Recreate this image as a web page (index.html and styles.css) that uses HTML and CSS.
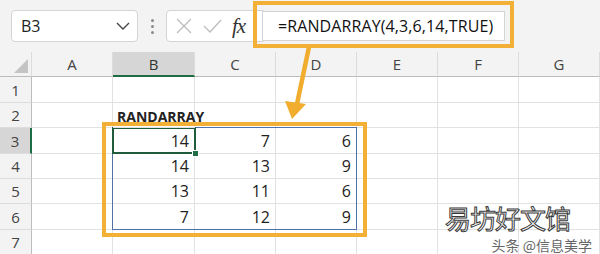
FILE: index.html
```html
<!DOCTYPE html>
<html lang="zh">
<head>
  <meta charset="UTF-8" />
  <title>RANDARRAY</title>
  <link rel="stylesheet" href="styles.css">
</head>
<body>
  <div class="page">
    <!-- Formula bar -->
    <header class="toolbar">
      <div class="name-box">
        <span>B3</span>
        <svg class="chevron" width="14" height="8" viewBox="0 0 14 8"><path d="M1 1 L7 7 L13 1" fill="none" stroke="#444" stroke-width="1.4"/></svg>
      </div>
      <div class="dots"><i></i><i></i><i></i></div>
      <div class="fx-box">
        <svg width="18" height="18" viewBox="0 0 18 18"><path d="M2 2 L16 16 M16 2 L2 16" stroke="#bdbdbd" stroke-width="1.3"/></svg>
        <svg width="20" height="18" viewBox="0 0 20 18"><path d="M2 9 L8 15 L19 3" fill="none" stroke="#bdbdbd" stroke-width="1.3"/></svg>
        <span class="fx">fx</span>
      </div>
      <div class="formula">=RANDARRAY(4,3,6,14,TRUE)</div>
    </header>

    <!-- Sheet -->
    <div class="sheet">
      <div class="corner"><svg width="14" height="14" viewBox="0 0 14 14"><path d="M14 0 L14 14 L0 14 Z" fill="#c4c4c4"/></svg></div>
      <div class="col-head">A</div>
      <div class="col-head active">B</div>
      <div class="col-head">C</div>
      <div class="col-head">D</div>
      <div class="col-head">E</div>
      <div class="col-head">F</div>
      <div class="col-head">G</div>

      <div class="row-head">1</div>
      <div class="cell"></div><div class="cell"></div><div class="cell"></div><div class="cell"></div><div class="cell"></div><div class="cell"></div><div class="cell"></div>

      <div class="row-head">2</div>
      <div class="cell"></div><div class="cell title">RANDARRAY</div><div class="cell"></div><div class="cell"></div><div class="cell"></div><div class="cell"></div><div class="cell"></div>

      <div class="row-head active">3</div>
      <div class="cell"></div><div class="cell num">14</div><div class="cell num">7</div><div class="cell num">6</div><div class="cell"></div><div class="cell"></div><div class="cell"></div>

      <div class="row-head">4</div>
      <div class="cell"></div><div class="cell num">14</div><div class="cell num">13</div><div class="cell num">9</div><div class="cell"></div><div class="cell"></div><div class="cell"></div>

      <div class="row-head">5</div>
      <div class="cell"></div><div class="cell num">13</div><div class="cell num">11</div><div class="cell num">6</div><div class="cell"></div><div class="cell"></div><div class="cell"></div>

      <div class="row-head">6</div>
      <div class="cell"></div><div class="cell num">7</div><div class="cell num">12</div><div class="cell num">9</div><div class="cell"></div><div class="cell"></div><div class="cell"></div>

      <div class="row-head">7</div>
      <div class="cell"></div><div class="cell"></div><div class="cell"></div><div class="cell"></div><div class="cell"></div><div class="cell"></div><div class="cell"></div>
    </div>

    <!-- Overlays -->
    <div class="selection"></div>
    <div class="active-cell"><span class="handle"></span></div>
    <div class="hl hl-formula"></div>
    <div class="hl hl-range"></div>
    <svg class="arrow" width="600" height="254" viewBox="0 0 600 254">
      <line x1="309" y1="47" x2="297" y2="104" stroke="#f0ad2e" stroke-width="4.5"/>
      <polygon points="285,101 306,104 292,119" fill="#f0ad2e"/>
    </svg>

    <div class="watermark">
      <div class="wm-big">易坊好文馆</div>
      <div class="wm-small">头条 @信息美学</div>
    </div>
  </div>
</body>
</html>
```

FILE: styles.css
```css
* {
  margin: 0;
  padding: 0;
  box-sizing: border-box;
}

body {
  font-family: "Open Sans", "Noto Sans", sans-serif;
  color: #222;
  background: #fff;
  width: 600px;
  height: 254px;
  overflow: hidden;
}

.page {
  position: relative;
  width: 600px;
  height: 254px;
  overflow: hidden;
}

/* toolbar */
.toolbar {
  height: 52px;
  background: #f3f3f3;
  display: flex;
  align-items: center;
  padding: 0 0 0 11px;
}

.name-box {
  width: 127px;
  height: 32px;
  background: #fff;
  border: 1px solid #d4d4d4;
  border-radius: 4px;
  display: flex;
  align-items: center;
  justify-content: space-between;
  padding: 0 7px 0 9px;
  font-size: 16px;
  color: #222;
}

.dots {
  width: 28px;
  display: flex;
  flex-direction: column;
  align-items: center;
  gap: 3px;
}

.dots i {
  width: 3px;
  height: 3px;
  border-radius: 50%;
  background: #8a8a8a;
}

.fx-box {
  width: 100px;
  height: 32px;
  background: #fff;
  border: 1px solid #d4d4d4;
  border-radius: 4px;
  display: flex;
  align-items: center;
  gap: 9px;
  padding-left: 8px;
}

.fx {
  font-family: "Liberation Serif", "DejaVu Serif", serif;
  font-style: italic;
  font-size: 21px;
  color: #333;
  margin-left: 1px;
  letter-spacing: -1px;
}

.formula {
  position: relative;
  margin-left: -4px;
  width: 243px;
  height: 30px;
  background: #fff;
  border: 1px solid #d4d4d4;
  font-size: 16px;
  line-height: 28px;
  padding-left: 15px;
  color: #111;
  letter-spacing: 0.1px;
}

/* sheet */
.sheet {
  display: grid;
  grid-template-columns: 32px 81px 82px 81px 81px 81px 81px 81px;
  grid-template-rows: 25px 26px 25px 26px 25px 25px 26px 25px;
}

.corner,
.col-head {
  background: #f3f3f3;
  border-right: 1px solid #dcdcdc;
  border-bottom: 1px solid #bcbcbc;
}

.corner {
  display: flex;
  align-items: flex-end;
  justify-content: flex-end;
  padding: 0 3px 3px 0;
}

.col-head {
  font-size: 15px;
  color: #444;
  text-align: center;
  line-height: 24px;
}

.col-head.active {
  background: #d6d6d6;
  border-bottom: 2px solid #1e6c44;
  color: #333;
}

.row-head {
  background: #f3f3f3;
  border-right: 1px solid #bcbcbc;
  border-bottom: 1px solid #dcdcdc;
  font-size: 15px;
  color: #444;
  display: flex;
  align-items: center;
  justify-content: center;
}

.row-head.active {
  background: #d6d6d6;
  border-right: 2px solid #1e6c44;
}

.cell {
  border-right: 1px solid #e2e2e2;
  border-bottom: 1px solid #e2e2e2;
  font-size: 16px;
}

.num {
  display: flex;
  align-items: center;
  justify-content: flex-end;
  padding-right: 5px;
}

.title {
  font-weight: bold;
  font-size: 14px;
  white-space: nowrap;
  overflow: visible;
  padding-left: 4px;
  line-height: 27px;
  position: relative;
  z-index: 1;
}

/* overlays */
.selection {
  position: absolute;
  left: 112px;
  top: 127px;
  width: 245px;
  height: 103px;
  border: 1px solid #4f72a8;
}

.active-cell {
  position: absolute;
  left: 112px;
  top: 127px;
  width: 84px;
  height: 27px;
  border: 2px solid #1f5b3d;
}

.handle {
  position: absolute;
  right: -5px;
  bottom: -5px;
  width: 7px;
  height: 7px;
  background: #1f6c46;
  border: 1px solid #fff;
}

.hl {
  position: absolute;
  border: 4px solid #f2b136;
}

.hl-formula {
  left: 253px;
  top: 1px;
  width: 261px;
  height: 47px;
}

.hl-range {
  left: 102px;
  top: 122px;
  width: 265px;
  height: 115px;
  z-index: 2;
}

.arrow {
  position: absolute;
  left: 0;
  top: 0;
}

.watermark {
  position: absolute;
  right: 8px;
  bottom: 0;
  display: flex;
  flex-direction: column;
  align-items: flex-end;
  gap: 4px;
  font-family: "Noto Sans CJK SC", sans-serif;
}

.wm-big {
  font-size: 26px;
  line-height: 30px;
  color: #fff;
  -webkit-text-stroke: 1px #3a3a3a;
  letter-spacing: -1px;
  margin-right: 22px;
}

.wm-small {
  font-size: 14px;
  line-height: 17px;
  color: #666;
  text-shadow: 0 0 2px #fff, 0 0 2px #fff;
}
```
